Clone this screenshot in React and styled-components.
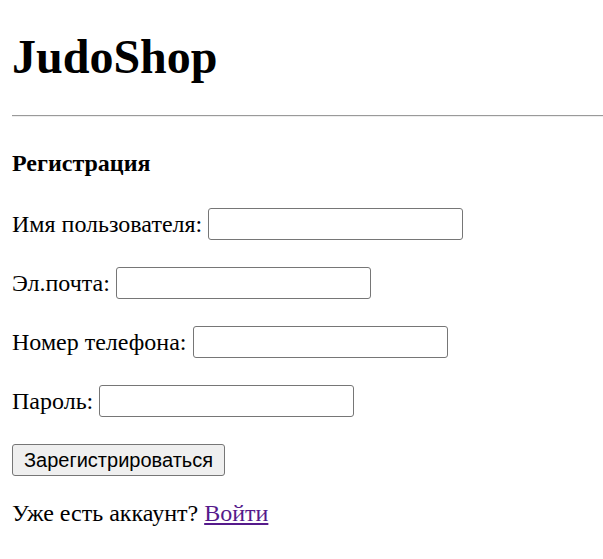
import React from "react";
import styled, { createGlobalStyle } from "styled-components";

const GlobalStyle = createGlobalStyle`
  html, body {
    margin: 0;
    padding: 0;
    background: #fff;
  }
  body {
    padding-left: 12px;
    font-family: "Liberation Serif", "Times New Roman", serif;
    font-size: 24px;
    color: #000;
  }
`;

const Title = styled.h1`
  margin: 0;
  padding-top: 29px;
  font-size: 48px;
  line-height: 56px;
  font-weight: bold;
`;

const Divider = styled.hr`
  margin: 30px 0 0;
  border: none;
  border-top: 1px solid #9a9a9a;
  border-bottom: 1px solid #eeeeee;
  height: 0;
`;

const Heading = styled.h3`
  margin: 32px 0 0;
  font-size: 24px;
  line-height: 28px;
  font-weight: bold;
`;

const Form = styled.form`
  display: flex;
  flex-direction: column;
  align-items: flex-start;
  gap: 27px;
  margin-top: 31px;
`;

const Field = styled.div`
  display: flex;
  align-items: center;
  gap: 6px;
  height: 32px;
`;

const Label = styled.label`
  font-size: 24px;
  line-height: 32px;
`;

const Input = styled.input`
  box-sizing: border-box;
  width: 255px;
  height: 32px;
  border: 1px solid #767676;
  border-radius: 3px;
  background: #fff;
  padding: 2px 3px;
  font-size: 20px;
`;

const Submit = styled.button`
  box-sizing: border-box;
  height: 32px;
  width: 213px;
  padding: 0;
  border: 1px solid #767676;
  border-radius: 3px;
  background: #efefef;
  color: #000;
  font-family: "Liberation Sans", Arial, sans-serif;
  font-size: 20px;
`;

const Footer = styled.p`
  margin: 21px 0 0;
  font-size: 24px;
  line-height: 32px;
`;

const LoginLink = styled.a`
  color: #551a8b;
  text-decoration: underline;
`;

const fields = [
  { id: "username", label: "Имя пользователя:", type: "text" },
  { id: "email", label: "Эл.почта:", type: "email" },
  { id: "phone", label: "Номер телефона:", type: "tel" },
  { id: "password", label: "Пароль:", type: "password" },
];

export default function App() {
  return (
    <>
      <GlobalStyle />
      <Title>JudoShop</Title>
      <Divider />
      <Heading>Регистрация</Heading>
      <Form onSubmit={(e) => e.preventDefault()}>
        {fields.map((f) => (
          <Field key={f.id}>
            <Label htmlFor={f.id}>{f.label}</Label>
            <Input id={f.id} name={f.id} type={f.type} />
          </Field>
        ))}
        <Submit type="submit">Зарегистрироваться</Submit>
      </Form>
      <Footer>
        Уже есть аккаунт? <LoginLink href="#">Войти</LoginLink>
      </Footer>
    </>
  );
}
